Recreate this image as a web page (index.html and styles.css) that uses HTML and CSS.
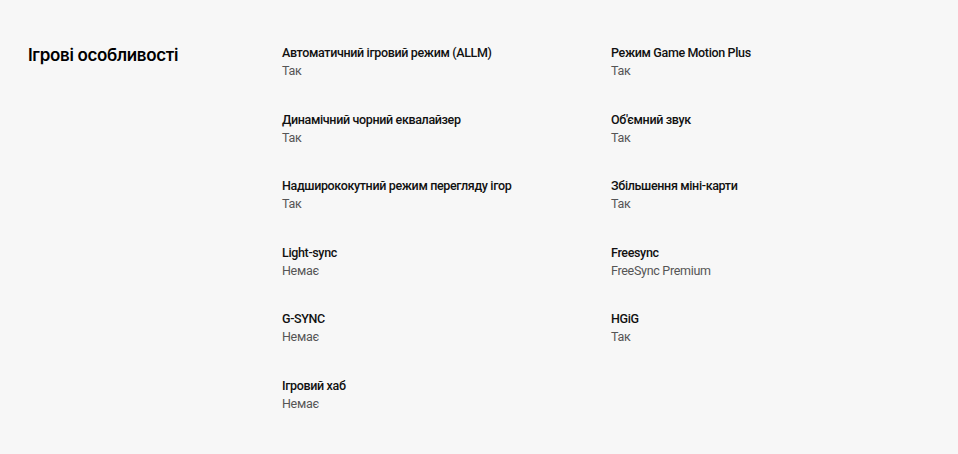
FILE: index.html
```html
<!DOCTYPE html>
<html lang="uk">
<head>
<meta charset="utf-8">
<link rel="stylesheet" href="styles.css">
</head>
<body>
<section class="spec">
  <h2 class="spec-title">Ігрові особливості</h2>
  <div class="spec-grid">
    <div class="item"><div class="label">Автоматичний ігровий режим (ALLM)</div><div class="value">Так</div></div>
    <div class="item"><div class="label">Режим Game Motion Plus</div><div class="value">Так</div></div>
    <div class="item"><div class="label">Динамічний чорний еквалайзер</div><div class="value">Так</div></div>
    <div class="item"><div class="label">Об'ємний звук</div><div class="value">Так</div></div>
    <div class="item"><div class="label">Надширококутний режим перегляду ігор</div><div class="value">Так</div></div>
    <div class="item"><div class="label">Збільшення міні-карти</div><div class="value">Так</div></div>
    <div class="item"><div class="label">Light-sync</div><div class="value">Немає</div></div>
    <div class="item"><div class="label">Freesync</div><div class="value">FreeSync Premium</div></div>
    <div class="item"><div class="label">G-SYNC</div><div class="value">Немає</div></div>
    <div class="item"><div class="label">HGiG</div><div class="value">Так</div></div>
    <div class="item"><div class="label">Ігровий хаб</div><div class="value">Немає</div></div>
  </div>
</section>
</body>
</html>
```
FILE: styles.css
```css
html, body {
  margin: 0;
  background: #f7f7f7;
}
body {
  font-family: Roboto, "Noto Sans", "Liberation Sans", sans-serif;
  color: #000;
}
.spec {
  display: flex;
  padding: 44px 0 0 28px;
}
.spec-title {
  width: 254px;
  margin: 0;
  font-family: Inter, sans-serif;
  font-size: 17px;
  font-weight: 600;
  letter-spacing: -0.35px;
  line-height: 22px;
}
.spec-grid {
  display: grid;
  grid-template-columns: 329px 329px;
  row-gap: 30.5px;
}
.item {
  display: flex;
  flex-direction: column;
}
.label {
  font-size: 12.5px;
  font-weight: 500;
  line-height: 18px;
  letter-spacing: -0.35px;
  color: #111;
}
.value {
  font-size: 12.5px;
  line-height: 18px;
  color: #555;
  letter-spacing: -0.3px;
}
```
